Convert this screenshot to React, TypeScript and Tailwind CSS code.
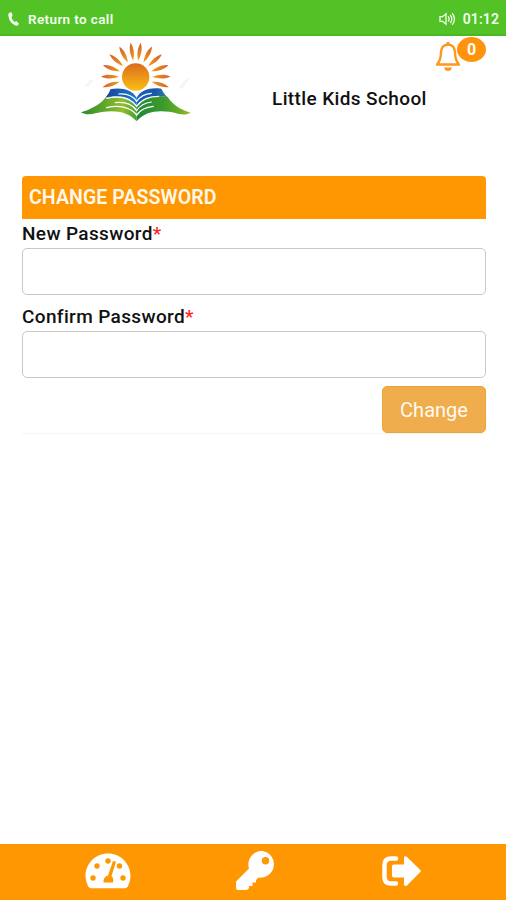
import React, { useState } from 'react';

// Types
interface PasswordFieldProps {
  id: string;
  label: string;
  value: string;
  onChange: (value: string) => void;
}

// Sun ray directions in degrees, measured from straight up
const rayAngles = [-107, -89, -70, -49, -28, -8.5, 8.5, 28, 49, 70, 89, 107];

// School Logo Component
const SchoolLogo: React.FC = () => {
  return (
    <svg className="w-28 h-20" viewBox="30 21 336 240" aria-label="Little Kids School">
      <defs>
        <linearGradient id="sun" x1="0" y1="0" x2="0" y2="1">
          <stop offset="0" stopColor="#dc6c1c" />
          <stop offset="1" stopColor="#fabf14" />
        </linearGradient>
        <linearGradient id="ray" x1="0" y1="0" x2="0" y2="1">
          <stop offset="0" stopColor="#d4602a" />
          <stop offset="1" stopColor="#f29a1c" />
        </linearGradient>
        <linearGradient id="pageLeft" gradientUnits="userSpaceOnUse" x1="33" y1="0" x2="200" y2="0">
          <stop offset="0" stopColor="#2c8a2c" />
          <stop offset="0.4" stopColor="#5ea52c" />
          <stop offset="0.75" stopColor="#8fbf2c" />
          <stop offset="1" stopColor="#4c9f2e" />
        </linearGradient>
        <linearGradient id="pageRight" gradientUnits="userSpaceOnUse" x1="200" y1="0" x2="362" y2="0">
          <stop offset="0" stopColor="#1f8a38" />
          <stop offset="0.5" stopColor="#3d9b2c" />
          <stop offset="0.8" stopColor="#6bad25" />
          <stop offset="1" stopColor="#a4bd22" />
        </linearGradient>
        <linearGradient id="blueLeft" x1="0" y1="0" x2="1" y2="0">
          <stop offset="0" stopColor="#1b3f9c" />
          <stop offset="1" stopColor="#1a7ccb" />
        </linearGradient>
        <linearGradient id="blueRight" x1="0" y1="0" x2="1" y2="0">
          <stop offset="0" stopColor="#1a5fc0" />
          <stop offset="0.6" stopColor="#1a56a8" />
          <stop offset="1" stopColor="#2f8a8c" />
        </linearGradient>
      </defs>

      {/* Faint marks on both sides */}
      <path d="M44 151l18-18 9 5-19 18z" fill="#f5f5f5" />
      <path d="M326 158l26-31 6 4-22 32z" fill="#f5f5f5" />

      {/* Sun */}
      {rayAngles.map((angle) => (
        <path
          key={angle}
          d="M197 22C205 38 204 58 197 76C190 58 189 38 197 22Z"
          fill="url(#ray)"
          transform={`rotate(${angle} 197 126)`}
        />
      ))}
      <circle cx="197" cy="126" r="41" fill="url(#sun)" />

      {/* Green pages */}
      <path d="M106 188C95 202 83 210 70 217C58 224 46 229 33 232C46 240 62 239 76 235C128 222 172 228 200 259V212C176 185 142 180 106 188Z" fill="url(#pageLeft)" />
      <path d="M293 186C303 202 317 213 332 221C342 226 352 230 362 233C350 240 338 239 324 236C274 223 228 226 200 259V212C222 185 256 178 293 186Z" fill="url(#pageRight)" />

      {/* Blue pages */}
      <path d="M122 162C158 157 186 164 200 188V213C180 184 146 178 106 188C114 180 118 171 122 162Z" fill="url(#blueLeft)" />
      <path d="M200 188C214 164 240 157 274 161C279 172 285 180 293 187C256 178 220 184 200 213Z" fill="url(#blueRight)" />

      {/* Page edges */}
      <g fill="none" stroke="#fff" strokeLinecap="round">
        <path d="M146 177C168 175 188 182 200 199C212 182 226 176 244 175" strokeWidth="3.500" />
        <path d="M110 190C148 182 182 189 200 214C216 191 240 184 266 184" strokeWidth="3.500" />
        <path d="M136 203C164 200 187 208 200 227C211 210 226 203 244 201" strokeWidth="3.500" />
        <path d="M110 218C148 209 183 217 200 240C212 223 228 216 250 214" strokeWidth="4" />
      </g>
    </svg>
  );
};

// Call Status Bar Component
const CallBar: React.FC<{ duration: string }> = ({ duration }) => {
  return (
    <div className="flex h-9 shrink-0 items-center justify-between border-b-2 border-[#48b921] bg-[#53c227] pl-2 pr-[7px] pt-1 font-semibold text-[#f3fff0]">
      <div className="flex items-center gap-[9px]">
        <svg className="h-[14px] w-[11px]" viewBox="0 0 11 14" fill="currentColor">
          <path d="M1 1.1L2.8.2Q3.4 0 3.7.6L4.6 3.4Q4.7 3.9 4.3 4.3L3.3 5.2Q4.3 8.2 6.6 10L7.9 9.4Q8.4 9.2 8.8 9.6L10.7 11.4Q11.1 11.9 10.6 12.4L9.4 13.5Q8.9 14 8 13.8Q1 11 .3 3.3Q.2 1.7 1 1.1Z" />
        </svg>
        <span className="text-[13.5px] tracking-[0.37px]">Return to call</span>
      </div>
      <div className="flex items-center gap-[7px]">
        <svg className="h-[14px] w-[17px]" viewBox="0 0 17 14" fill="none" stroke="currentColor" strokeWidth="1.3">
          <path d="M1 4.7h2.6L7 1.8v10.4L3.6 9.3H1z" />
          <path d="M9.2 4.4q1.8 2.6 0 5.2M11.3 2.8q3 4.2 0 8.4M13.2 1.1q4.6 5.9 0 11.8" />
        </svg>
        <span className="text-[14px] tracking-[0.1px]">{duration}</span>
      </div>
    </div>
  );
};

// Notification Bell Component
const NotificationBell: React.FC<{ count: number }> = ({ count }) => {
  return (
    <button type="button" aria-label="Notifications" className="relative h-9 w-[51px]">
      <svg className="mt-[3px] h-[31px] w-[26px]" viewBox="0 0 26 31" fill="none" stroke="#fd9820" strokeWidth="2.400">
        <path d="M13 4.5Q6.500 5 6 12Q6 20 2 24.500H24Q20 20 20 12Q19.500 5 13 4.5Z" strokeLinejoin="round" />
        <path d="M13 2V5" strokeWidth="3" />
        <path d="M9 27.500H17Q16 31 13 31Q10 31 9 27.500Z" fill="#fd9820" stroke="none" />
      </svg>
      <span className="absolute right-0 top-px flex h-[25px] w-[29px] items-center justify-center rounded-[50%] bg-[#ff930b] text-base font-bold text-white">
        {count}
      </span>
    </button>
  );
};

// Password Field Component
const PasswordField: React.FC<PasswordFieldProps> = ({ id, label, value, onChange }) => {
  return (
    <div className="h-[83px]">
      <label htmlFor={id} className="block h-[29px] pt-px text-[19px] font-medium leading-[27px] tracking-[0.36px] text-[#111]">
        {label}
        <span className="text-[#f22]">*</span>
      </label>
      <input
        id={id}
        type="password"
        value={value}
        onChange={(e) => onChange(e.target.value)}
        className="block h-[47px] w-full rounded-[5px] border-[1.5px] border-[#c8c8c8] bg-white px-3 text-lg outline-none"
      />
    </div>
  );
};

// Bottom Navigation Component
const BottomNav: React.FC = () => {
  return (
    <nav className="flex h-14 shrink-0 items-start bg-[#ff9703] pl-[85px] text-white">
      <button type="button" aria-label="Dashboard" className="mt-[9px]">
        <svg className="h-9 w-[46px]" viewBox="0 0 46 36">
          <path d="M23 .5C10.500 .5 .5 10.500 .5 23Q.5 28.500 3 33Q4 35.300 6 35.300H40Q42 35.300 43 33Q45.500 28.500 45.500 23C45.500 10.500 35.500 .5 23 .5Z" fill="currentColor" />
          <g fill="#ff9703">
            <circle cx="8" cy="25" r="2.700" />
            <circle cx="12" cy="13" r="2.700" />
            <circle cx="23" cy="8" r="2.700" />
            <circle cx="34.500" cy="13" r="2.700" />
            <circle cx="38" cy="25" r="2.700" />
            <path d="M28 8L31 8.800L26.500 23Q29 25.500 28 29.500H18.500Q18 24 23 22.500Z" />
          </g>
        </svg>
      </button>
      <button type="button" aria-label="Change password" className="ml-[105px] mt-[7px]">
        <svg className="h-[39px] w-10" viewBox="0 0 40 39">
          <path
            fillRule="evenodd"
            fill="currentColor"
            d="M26.500 0A13.400 13.400 0 1 1 22.500 26.500L20 29V31.500H16.500V35H13V37Q12 39 10 39H2Q0 39 0 37V30.500L13 17.500A13.400 13.400 0 0 1 26.500 0ZM29.500 6A3.700 3.700 0 1 0 29.500 13.400A3.700 3.700 0 1 0 29.500 6Z"
          />
        </svg>
      </button>
      <button type="button" aria-label="Log out" className="ml-[106px] mt-3">
        <svg className="h-[31px] w-[39px]" viewBox="0 0 39 31">
          <path d="M14 2.500H9Q2.500 2.500 2.500 9V21Q2.500 27.500 9 27.500H14" fill="none" stroke="currentColor" strokeWidth="4.500" strokeLinecap="round" />
          <path d="M22 1.500Q22.500 -.5 25 1L38.300 14Q39.300 15 38.300 16L25 29.500Q22.500 31 22 28.500V21.500H12Q10 21.500 10 19.500V10.500Q10 8.500 12 8.500H22Z" fill="currentColor" />
        </svg>
      </button>
    </nav>
  );
};

// Main Change Password Page
export default function App() {
  const [newPassword, setNewPassword] = useState('');
  const [confirmPassword, setConfirmPassword] = useState('');

  return (
    <div className="flex h-screen min-h-[900px] flex-col bg-white font-['Roboto',sans-serif]">
      <CallBar duration="01:12" />

      {/* Header */}
      <header className="flex h-[140px] shrink-0 items-start pl-20 pr-5">
        <div className="pt-1.5">
          <SchoolLogo />
        </div>
        <h1 className="ml-20 mt-[49px] whitespace-nowrap text-[19px] font-medium leading-[27px] tracking-[0.38px] text-[#111]">
          Little Kids School
        </h1>
        <div className="ml-auto">
          <NotificationBell count={0} />
        </div>
      </header>

      {/* Password Form */}
      <main className="grow pl-[22px] pr-5">
        <form onSubmit={(e) => e.preventDefault()}>
          <h2 className="h-[43px] rounded-t-[4px] bg-[#ff9703] pl-[7px] pt-px text-[19.5px] font-semibold leading-[42px] tracking-[0.1px] text-[#fff8ec]">
            CHANGE PASSWORD
          </h2>
          <PasswordField id="new-password" label="New Password" value={newPassword} onChange={setNewPassword} />
          <PasswordField id="confirm-password" label="Confirm Password" value={confirmPassword} onChange={setConfirmPassword} />
          <div className="flex justify-end border-b border-[#f5f5f5] pt-px">
            <button
              type="submit"
              className="h-[47px] w-[104px] rounded-[5px] border border-[#eea236] bg-[#f0ad4e] text-[20px] text-[#fffaf0]"
            >
              Change
            </button>
          </div>
        </form>
      </main>

      <BottomNav />
    </div>
  );
}
